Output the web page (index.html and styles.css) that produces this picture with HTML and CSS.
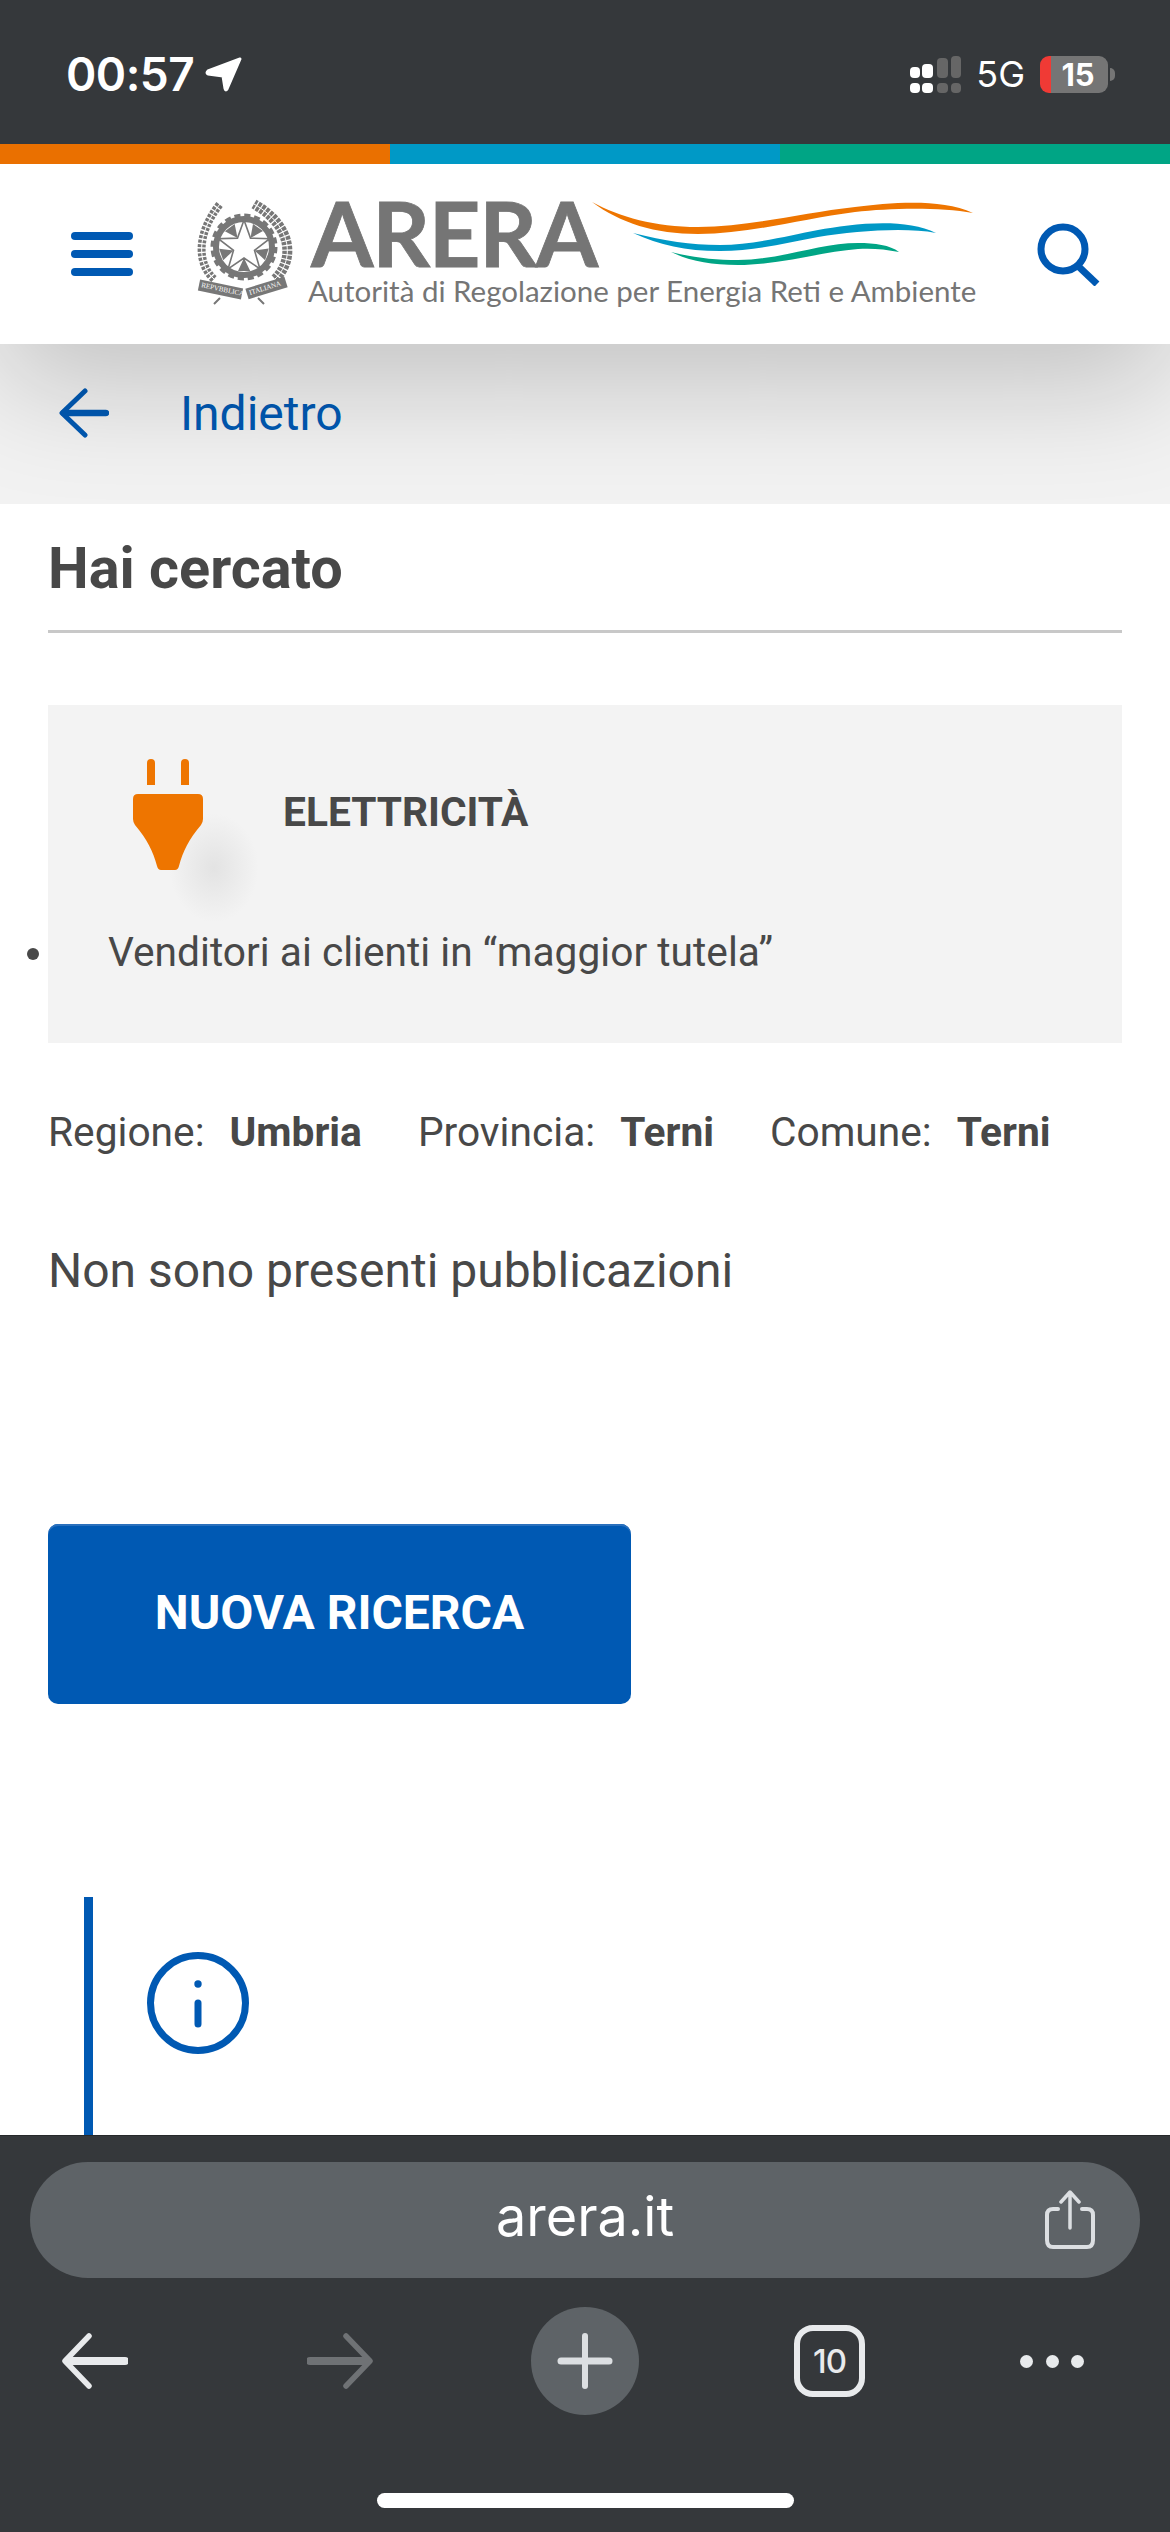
FILE: index.html
```html
<!DOCTYPE html>
<html lang="it">
<head>
    <meta charset="UTF-8">
    <meta name="viewport" content="width=device-width, initial-scale=1.0">
    <title>ARERA - Hai cercato</title>
    <link rel="stylesheet" href="styles.css">
</head>
<body>
<div class="page">

    <div class="status-bar">
        <div class="status-left">
            <span class="time">00:57</span>
            <svg class="loc-arrow" width="37" height="35" viewBox="0 0 37 35"><path d="M35 2 L22 32 Q20.5 34 20 31.5 L18 19 L3 17 Q1 16 3 14 Z" fill="#fff" stroke="#fff" stroke-width="3" stroke-linejoin="round"/></svg>
        </div>
        <div class="status-right">
            <svg class="signal" width="52" height="37" viewBox="0 0 52 37">
                <rect x="1" y="11" width="10" height="11" rx="4" fill="#fff"/>
                <rect x="13" y="8" width="11" height="14" rx="4" fill="#fff"/>
                <rect x="28" y="2" width="11" height="20" rx="4" fill="#666"/>
                <rect x="42" y="0" width="10" height="22" rx="4" fill="#666"/>
                <rect x="1" y="27" width="10" height="10" rx="4" fill="#fff"/>
                <rect x="13" y="27" width="11" height="10" rx="4" fill="#fff"/>
                <rect x="28" y="27" width="11" height="10" rx="4" fill="#666"/>
                <rect x="42" y="27" width="10" height="10" rx="4" fill="#666"/>
            </svg>
            <span class="network">5G</span>
            <div class="battery"><span>15</span></div>
            <div class="battery-nub"></div>
        </div>
    </div>

    <div class="stripes">
        <div class="stripe orange"></div>
        <div class="stripe blue"></div>
        <div class="stripe green"></div>
    </div>

    <header class="site-header">
        <div class="hamburger"><span></span><span></span><span></span></div>
        <svg class="logo" width="790" height="135" viewBox="0 -20 790 135">
            <!-- emblema -->
            <g fill="none" stroke="#777">
                <path d="M24 84 C8 70 5 40 30 9" stroke-width="8" stroke-dasharray="3 1.4"/>
                <path d="M85 84 C104 66 104 32 64 9" stroke-width="10" stroke-dasharray="3.5 1.2"/>
                <path d="M24 84 C8 70 5 40 30 9 M85 84 C104 66 104 32 64 9" stroke="#fff" stroke-width="1"/>
                <circle cx="54" cy="52" r="28" stroke-width="6"/>
                <circle cx="54" cy="52" r="31" stroke-width="5" stroke-dasharray="6 3.74"/>
            </g>
            <g fill="#777">
                <polygon points="60.5,43.1 63,29 73,36"/>
                <polygon points="60.5,43.1 63,29 73,36" transform="rotate(72 54 52)"/>
                <polygon points="60.5,43.1 63,29 73,36" transform="rotate(144 54 52)"/>
                <polygon points="60.5,43.1 63,29 73,36" transform="rotate(216 54 52)"/>
                <polygon points="60.5,43.1 63,29 73,36" transform="rotate(288 54 52)"/>
            </g>
            <polygon points="54,25 60.5,43.1 79.7,43.7 64.5,55.4 69.9,73.8 54,63 38.1,73.8 43.5,55.4 28.3,43.7 47.5,43.1" fill="#fff" stroke="#777" stroke-width="1.6"/>
            <g fill="none" stroke="#777">
                <path d="M9 90 L52 99" stroke-width="11"/>
                <path d="M57 99 L96 87" stroke-width="11"/>
                <path d="M30 103 L24 109 M68 103 L74 109" stroke-width="2"/>
            </g>
            <text class="ribbon-text" transform="translate(11 92) rotate(12)">REPVBBLICA</text>
            <text class="ribbon-text" transform="translate(60 100) rotate(-17)">ITALIANA</text>
            <!-- onde -->
            <path d="M402 7 C430 22 465 32 508 32 C560 32 610 18 665 12 C700 8 750 3 783 18 C750 12 700 13 665 17 C610 24 560 39 508 39 C465 39 430 28 402 7Z" fill="#ee7500"/>
            <path d="M443 38 C475 46 500 50 530 50 C565 50 600 40 628 35 C660 29 715 22 746 38 C715 32 665 36 628 42 C595 48 565 56 530 56 C495 56 470 50 443 38Z" fill="#0099c6"/>
            <path d="M481 57 C505 63 525 65 548 65 C590 65 630 48 668 48 C685 48 700 50 709 57 C695 54 680 53 668 54 C630 57 590 70 548 70 C520 70 500 66 481 57Z" fill="#00a585"/>
            <text class="logo-name" x="121" y="72">ARERA</text>
            <text class="logo-sub" x="118" y="107">Autorità di Regolazione per Energia Reti e Ambiente</text>
        </svg>
        <svg class="search" width="64" height="63" viewBox="0 0 64 63" fill="none" stroke="#0059b3" stroke-width="7">
            <circle cx="26" cy="26" r="22"/>
            <path d="M41 43 L60 61"/>
        </svg>
    </header>

    <nav class="back-bar">
        <svg width="50" height="50" viewBox="0 0 50 50" fill="none" stroke="#0059b3" stroke-linecap="round" stroke-linejoin="round">
            <path d="M26 3 L3 25 L26 47" stroke-width="5"/>
            <path d="M5 25 H47" stroke-width="6.5"/>
        </svg>
        <a class="back-link">Indietro</a>
    </nav>

    <main class="content">
        <h1 class="title">Hai cercato</h1>

        <section class="card">
            <div class="card-head">
                <svg width="70" height="111" viewBox="0 0 70 111" fill="#ee7500">
                    <path d="M14 26 V4 Q14 0 18 0 Q22 0 22 4 V26 Z"/>
                    <path d="M48 26 V4 Q48 0 52 0 Q56 0 56 4 V26 Z"/>
                    <path d="M5 35 H65 Q70 35 70 40 V60 Q70 63 68 66 C56 80 50 92 46 107 Q45 111 42 111 H28 Q25 111 24 107 C20 92 14 80 2 66 Q0 63 0 60 V40 Q0 35 5 35 Z"/>
                </svg>
                <h2 class="card-title">ELETTRICITÀ</h2>
            </div>
            <ul class="card-list">
                <li>Venditori ai clienti in “maggior tutela”</li>
            </ul>
            <div class="card-smudge"></div>
        </section>

        <div class="filters">
            <div class="filter"><span>Regione:</span><strong>Umbria</strong></div>
            <div class="filter"><span>Provincia:</span><strong>Terni</strong></div>
            <div class="filter"><span>Comune:</span><strong>Terni</strong></div>
        </div>

        <p class="empty">Non sono presenti pubblicazioni</p>

        <a class="btn-primary">NUOVA RICERCA</a>

        <aside class="info-box">
            <svg width="102" height="102" viewBox="0 0 102 102" fill="none" stroke="#0059b3" stroke-width="7">
                <circle cx="51" cy="51" r="47.5"/>
                <circle cx="51" cy="32" r="3.7" fill="#0059b3" stroke="none"/>
                <path d="M51 51 V72" stroke-linecap="round"/>
            </svg>
        </aside>
    </main>

    <footer class="browser-bar">
        <div class="url-pill">
            <span></span>
            <span class="url">arera.it</span>
            <svg class="share" width="50" height="60" viewBox="0 0 50 60" fill="none" stroke="#dcdfe2" stroke-linecap="round" stroke-linejoin="round">
                <path d="M13 19 H8 Q2 19 2 25 V50 Q2 57 8 57 H42 Q48 57 48 50 V25 Q48 19 42 19 H37" stroke-width="4"/>
                <path d="M25 38 V3 M16 12 L25 2 L34 12" stroke-width="3.5"/>
            </svg>
        </div>
        <div class="browser-icons">
            <svg class="nav-back" width="66" height="56" viewBox="0 0 66 56" fill="none" stroke="#e8eaec" stroke-linecap="round" stroke-linejoin="round">
                <path d="M27 3 L3 28 L27 53" stroke-width="5.5"/>
                <path d="M6 28 H63" stroke-width="8"/>
            </svg>
            <svg class="nav-forward" width="66" height="56" viewBox="0 0 66 56" fill="none" stroke="#6f7275" stroke-linecap="round" stroke-linejoin="round">
                <path d="M39 3 L63 28 L39 53" stroke-width="5.5"/>
                <path d="M3 28 H60" stroke-width="8"/>
            </svg>
            <div class="new-tab">
                <svg width="56" height="56" viewBox="0 0 56 56" fill="none" stroke="#dcdfe2" stroke-linecap="round">
                    <path d="M28 3 V53" stroke-width="6"/>
                    <path d="M4 28 H52" stroke-width="7"/>
                </svg>
            </div>
            <div class="tabs-count">10</div>
            <div class="more"><span></span><span></span><span></span></div>
        </div>
        <div class="home-bar"></div>
    </footer>

</div>
</body>
</html>
```
FILE: styles.css
```css
* {
    box-sizing: border-box;
}
html, body {
    margin: 0;
    padding: 0;
}
body {
    font-family: Roboto, "Liberation Sans", sans-serif;
    color: #484848;
    background: #fff;
}
.page {
    width: 1170px;
    height: 2532px;
    display: flex;
    flex-direction: column;
    overflow: hidden;
}

/* status bar */
.status-bar {
    height: 144px;
    background: #35383b;
    color: #fff;
    font-family: Inter, "Liberation Sans", sans-serif;
    display: flex;
    justify-content: space-between;
    align-items: flex-start;
    padding: 56px 55px 0 66px;
    position: relative;
    z-index: 3;
}
.status-left {
    display: flex;
    align-items: center;
    gap: 11px;
}
.time {
    font-size: 46px;
    font-weight: 600;
    line-height: 37px;
    letter-spacing: -0.5px;
}
.status-right {
    display: flex;
    align-items: center;
}
.network {
    font-size: 36px;
    font-weight: 400;
    line-height: 37px;
    margin-left: 15px;
}
.battery {
    width: 68px;
    height: 37px;
    margin-left: 15px;
    border-radius: 9px;
    background: linear-gradient(90deg, #f03a35 11px, #757575 11px);
    text-align: center;
    font-size: 31px;
    font-weight: 700;
    line-height: 37px;
    padding-left: 8px;
}
.battery-nub {
    width: 5px;
    height: 13px;
    margin-left: 2px;
    border-radius: 0 6px 6px 0;
    background: #757575;
}

.stripes {
    display: flex;
    height: 20px;
    position: relative;
    z-index: 3;
}
.stripe {
    flex: 1;
}
.stripe.orange { background: #ea7000; }
.stripe.blue { background: #0099c6; }
.stripe.green { background: #00a585; }

/* header */
.site-header {
    height: 180px;
    background: #fff;
    display: flex;
    align-items: center;
    padding-left: 71px;
    position: relative;
    z-index: 2;
    box-shadow: 0 40px 120px rgba(0, 0, 0, 0.2);
}
.hamburger {
    width: 62px;
    display: flex;
    flex-direction: column;
    gap: 10px;
}
.hamburger span {
    height: 8px;
    border-radius: 4px;
    background: #0059b3;
}
.logo {
    margin-left: 57px;
    margin-bottom: 23px;
}
.logo-name {
    font-family: Lato, sans-serif;
    font-size: 90px;
    font-weight: 700;
    letter-spacing: -1.3px;
    fill: #757575;
    stroke: #757575;
    stroke-width: 0.8px;
}
.logo-sub {
    font-family: Lato, sans-serif;
    font-size: 29.5px;
    fill: #757575;
}
.ribbon-text {
    font-family: "Liberation Serif", serif;
    font-size: 7px;
    fill: #fff;
}
.search {
    margin-left: 57px;
}

.back-bar {
    height: 160px;
    background: #f2f2f2;
    display: flex;
    align-items: center;
    padding-left: 59px;
    gap: 71px;
    padding-bottom: 22px;
}
.back-link {
    font-size: 48px;
    color: #0059b3;
}

/* main content */
.content {
    flex: 1;
    min-height: 0;
    overflow: hidden;
    padding: 32px 48px 0;
}
.title {
    margin: 0;
    font-size: 57.6px;
    line-height: 66px;
    font-weight: 700;
    padding-bottom: 28px;
    border-bottom: 3px solid #c8c8c8;
}
.card {
    position: relative;
    height: 338px;
    margin-top: 72px;
    padding: 54px 0 0 85px;
    background: #f3f3f3;
}
.card-head {
    display: flex;
    align-items: center;
    gap: 80px;
    position: relative;
    z-index: 1;
}
.card-title {
    margin: 0 0 6px;
    font-size: 40.7px;
    line-height: 48px;
    font-weight: 700;
}
.card-list {
    margin: 58px 0 0 -85px;
    padding: 0;
    list-style: none;
    font-size: 40.7px;
    line-height: 48px;
}
.card-list li {
    position: relative;
    padding-left: 60px;
}
.card-list li::before {
    content: "";
    position: absolute;
    left: -21px;
    top: 20px;
    width: 12px;
    height: 12px;
    border-radius: 50%;
    background: #484848;
}
.card-smudge {
    position: absolute;
    left: 121px;
    top: 108px;
    width: 90px;
    height: 110px;
    background: radial-gradient(ellipse, #e3e3e3 0%, rgba(227, 227, 227, 0) 70%);
}
.filters {
    display: flex;
    gap: 56px;
    margin-top: 65px;
    font-size: 40.7px;
    line-height: 48px;
}
.filter {
    display: flex;
    gap: 25px;
}
.filter strong {
    font-weight: 700;
}
.empty {
    margin: 87px 0 0;
    font-size: 48px;
    line-height: 56px;
}
.btn-primary {
    display: flex;
    align-items: center;
    justify-content: center;
    width: 583px;
    height: 180px;
    margin-top: 225px;
    padding-bottom: 4px;
    border-radius: 10px;
    background: #0059b3;
    box-shadow: inset 0 2px 0 #2a70bd;
    color: #fff;
    font-size: 48px;
    font-weight: 700;
}
.info-box {
    height: 300px;
    margin: 193px 0 0 36px;
    padding: 55px 0 0 54px;
    border-left: 9px solid #0059b3;
}

/* browser chrome */
.browser-bar {
    height: 397px;
    background: #35383b;
    border-top: 1px solid #26292b;
    padding-top: 26px;
}
.url-pill {
    width: 1110px;
    height: 116px;
    margin-left: 30px;
    border-radius: 58px;
    background: #5e6367;
    color: #fff;
    display: grid;
    grid-template-columns: 1fr auto 1fr;
    align-items: center;
}
.url {
    font-family: Inter, "Liberation Sans", sans-serif;
    font-size: 54px;
    font-weight: 400;
    line-height: 60px;
    padding-bottom: 6px;
}
.share {
    justify-self: end;
    margin-right: 45px;
}
.browser-icons {
    display: flex;
    align-items: center;
    height: 108px;
    margin-top: 29px;
    padding-left: 62px;
}
.nav-forward { margin-left: 179px; }
.new-tab {
    width: 108px;
    height: 108px;
    margin-left: 158px;
    border-radius: 50%;
    background: #5e6367;
    display: flex;
    align-items: center;
    justify-content: center;
}
.tabs-count {
    width: 71px;
    height: 72px;
    margin-left: 155px;
    border: 6px solid #e8eaec;
    border-radius: 19px;
    color: #e8eaec;
    font-family: Inter, "Liberation Sans", sans-serif;
    font-size: 33px;
    font-weight: 500;
    letter-spacing: -1px;
    display: flex;
    align-items: center;
    justify-content: center;
}
.more {
    display: flex;
    gap: 12.5px;
    margin-left: 155px;
}
.more span {
    width: 13px;
    height: 13px;
    border-radius: 50%;
    background: #e8eaec;
}
.home-bar {
    width: 417px;
    height: 15px;
    margin: 78px 0 0 377px;
    border-radius: 8px;
    background: #fff;
}
```
